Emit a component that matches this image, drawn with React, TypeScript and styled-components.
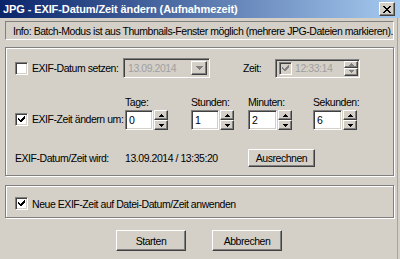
import React from "react";
import styled, { createGlobalStyle, css } from "styled-components";

const Global = createGlobalStyle`
  html, body { margin: 0; padding: 0; background: #d4d0c8; }
  * { box-sizing: border-box; }
`;

const raised = css`
  border-style: solid;
  border-width: 1px;
  border-color: #fff #404040 #404040 #fff;
  box-shadow: inset -1px -1px 0 #808080, inset 1px 1px 0 #d4d0c8;
`;

const sunken = css`
  border-style: solid;
  border-width: 1px;
  border-color: #808080 #fff #fff #808080;
  box-shadow: inset 1px 1px 0 #404040, inset -1px -1px 0 #d4d0c8;
`;

const Window = styled.div`
  width: 400px;
  height: 259px;
  background: #d4d0c8;
  font-family: "Liberation Sans", Arial, sans-serif;
  font-size: 10.5px;
  letter-spacing: -0.45px;
  color: #000;
  display: flex;
  flex-direction: column;
  overflow: hidden;
`;

const TitleBar = styled.div`
  height: 18px;
  background: linear-gradient(to right, #0a246a, #a6caf0);
  display: flex;
  align-items: center;
  justify-content: space-between;
  padding: 0 5px 0 3px;
`;

const TitleText = styled.span`
  color: #fff;
  font-family: "Liberation Sans", Arial, sans-serif;
  font-weight: bold;
  font-size: 11px;
  letter-spacing: -0.1px;
  white-space: nowrap;
`;

const CloseButton = styled.div`
  width: 16px;
  height: 14px;
  background: #d4d0c8;
  ${raised};
  display: flex;
  align-items: center;
  justify-content: center;
`;

const Content = styled.div`
  flex: 1;
  display: flex;
  flex-direction: column;
  padding: 3px 3px 0 5px;
  margin-right: 2px;
  border-right: 1px solid #a8a49c;
`;

const InfoBox = styled.div`
  height: 19px;
  border: 1px solid;
  border-color: #808080 #fff #fff #808080;
  display: flex;
  align-items: center;
  padding-left: 7px;
  white-space: nowrap;
`;

const Group = styled.div<{ $h: number; $mt: number }>`
  height: ${(p) => p.$h}px;
  margin-top: ${(p) => p.$mt}px;
  border: 1px solid #808080;
  box-shadow: inset 1px 1px 0 #fff, 1px 1px 0 #fff;
  padding: 0 0 0 9px;
  display: flex;
  flex-direction: column;
`;

const Row = styled.div<{ $mt: number }>`
  display: flex;
  align-items: center;
  margin-top: ${(p) => p.$mt}px;
`;

const CheckLabel = styled.label<{ $w?: number }>`
  display: flex;
  align-items: center;
  gap: 4px;
  width: ${(p) => (p.$w ? `${p.$w}px` : "auto")};
  white-space: nowrap;
`;

const Box = styled.span<{ $disabled?: boolean }>`
  width: 13px;
  height: 13px;
  background: ${(p) => (p.$disabled ? "#d4d0c8" : "#fff")};
  ${sunken};
  display: inline-flex;
  align-items: center;
  justify-content: center;
  flex: none;
`;

const Check = ({ checked, disabled }: { checked?: boolean; disabled?: boolean }) => (
  <Box $disabled={disabled}>
    {checked && (
      <svg width="7" height="7" viewBox="0 0 7 7">
        <path
          d="M0 2h1v1h1v1h1V3h1V2h1V1h1V0h1v3h-1v1h-1v1h-1v1h-1v1H3V6H2V5H1V4H0z"
          fill={disabled ? "#808080" : "#000"}
        />
      </svg>
    )}
  </Box>
);

const Combo = styled.div`
  width: 87px;
  height: 20px;
  margin-left: -2px;
  background: #d4d0c8;
  ${sunken};
  display: flex;
  align-items: stretch;
  padding: 2px;
`;

const ComboText = styled.span`
  flex: 1;
  color: #a0a0a0;
  display: flex;
  align-items: center;
  padding-left: 2px;
`;

const DropButton = styled.div`
  width: 16px;
  background: #d4d0c8;
  ${raised};
  display: flex;
  align-items: center;
  justify-content: center;
`;

const ZeitLabel = styled.span`
  margin-left: 33px;
  width: 32px;
`;

const TimePicker = styled.div`
  width: 85px;
  height: 19px;
  background: #d4d0c8;
  ${sunken};
  display: flex;
  align-items: center;
  padding: 2px 1px 2px 3px;
`;

const DisabledText = styled.span`
  color: #a0a0a0;
  margin-left: 3px;
  flex: 1;
`;

const SpinStack = styled.div<{ $h: number }>`
  width: 14px;
  height: ${(p) => p.$h}px;
  display: flex;
  flex-direction: column;
  flex: none;
`;

const SpinBtn = styled.div`
  flex: 1;
  background: #d4d0c8;
  ${raised};
  display: flex;
  align-items: center;
  justify-content: center;
`;

const Arrow = ({ up, color = "#000" }: { up?: boolean; color?: string }) => (
  <svg width="5" height="3" viewBox="0 0 5 3">
    <path d={up ? "M2 0h1v1h1v1h1v1H0V2h1V1h1z" : "M0 0h5v1H4v1H3v1H2V2H1V1H0z"} fill={color} />
  </svg>
);

const Spinner = ({ h, color }: { h: number; color?: string }) => (
  <SpinStack $h={h}>
    <SpinBtn>
      <Arrow up color={color} />
    </SpinBtn>
    <SpinBtn>
      <Arrow color={color} />
    </SpinBtn>
  </SpinStack>
);

const Grid = styled.div`
  display: grid;
  grid-template-columns: 110px 66px 57px 65px 44px;
  grid-template-rows: 11px 22px 37px;
  margin-top: 19px;
  flex: none;
`;

const ColLabel = styled.span<{ $col: number }>`
  grid-column: ${(p) => p.$col};
  grid-row: 1;
  line-height: 11px;
  white-space: nowrap;
`;

const SpinCell = styled.div<{ $col: number }>`
  grid-column: ${(p) => p.$col};
  grid-row: 2;
  align-self: end;
  display: flex;
  gap: 1px;
  height: 20px;
`;

const Edit = styled.div<{ $w: number }>`
  width: ${(p) => p.$w}px;
  height: 20px;
  background: #fff;
  ${sunken};
  padding: 2px 3px;
  display: flex;
  align-items: center;
`;

const Cell = styled.div<{ $col: string; $row: number }>`
  grid-column: ${(p) => p.$col};
  grid-row: ${(p) => p.$row};
  display: flex;
  align-items: center;
  white-space: nowrap;
`;

const ResultCell = styled(Cell)`
  align-self: end;
  height: 18px;
`;

const Button = styled.div<{ $w: number; $h: number }>`
  width: ${(p) => p.$w}px;
  height: ${(p) => p.$h}px;
  background: #d4d0c8;
  ${raised};
  display: flex;
  align-items: center;
  justify-content: center;
`;

const ButtonRow = styled.div`
  display: flex;
  gap: 26px;
  margin-top: 12px;
  padding-left: 111px;
`;

const spins = [
  { col: 2, label: "Tage:", value: "0", w: 28 },
  { col: 3, label: "Stunden:", value: "1", w: 28 },
  { col: 4, label: "Minuten:", value: "2", w: 29 },
  { col: 5, label: "Sekunden:", value: "6", w: 29 },
];

export default function App() {
  return (
    <>
      <Global />
      <Window>
        <TitleBar>
          <TitleText>JPG - EXIF-Datum/Zeit ändern (Aufnahmezeit)</TitleText>
          <CloseButton>
            <svg width="8" height="7" viewBox="0 0 8 7">
              <path
                d="M0 0h2v1h1v1h2V1h1V0h2v1H7v1H6v1H5v1h1v1h1v1h1v1H6V6H5V5H3v1H2v1H0V6h1V5h1V4h1V3H2V2H1V1H0z"
                fill="#000"
              />
            </svg>
          </CloseButton>
        </TitleBar>
        <Content>
          <InfoBox>Info: Batch-Modus ist aus Thumbnails-Fenster möglich (mehrere JPG-Dateien markieren).</InfoBox>
          <Group $h={129} $mt={7}>
            <Row $mt={10}>
              <CheckLabel $w={110}>
                <Check />
                EXIF-Datum setzen:
              </CheckLabel>
              <Combo>
                <ComboText>13.09.2014</ComboText>
                <DropButton>
                  <svg width="7" height="4" viewBox="0 0 7 4">
                    <path d="M0 0h7v1H6v1H5v1H4v1H3V3H2V2H1V1H0z" fill="#808080" />
                  </svg>
                </DropButton>
              </Combo>
              <ZeitLabel>Zeit:</ZeitLabel>
              <TimePicker>
                <Check checked disabled />
                <DisabledText>12:33:14</DisabledText>
                <Spinner h={15} color="#808080" />
              </TimePicker>
            </Row>
            <Grid>
              {spins.map((s) => (
                <ColLabel key={s.label} $col={s.col}>
                  {s.label}
                </ColLabel>
              ))}
              <Cell $col="1" $row={2}>
                <CheckLabel>
                  <Check checked />
                  EXIF-Zeit ändern um:
                </CheckLabel>
              </Cell>
              {spins.map((s) => (
                <SpinCell key={s.value} $col={s.col}>
                  <Edit $w={s.w}>{s.value}</Edit>
                  <Spinner h={20} />
                </SpinCell>
              ))}
              <ResultCell $col="1" $row={3}>EXIF-Datum/Zeit wird:</ResultCell>
              <ResultCell $col="2 / 4" $row={3}>13.09.2014 / 13:35:20</ResultCell>
              <ResultCell $col="4 / 6" $row={3}>
                <Button $w={67} $h={18}>Ausrechnen</Button>
              </ResultCell>
            </Grid>
          </Group>
          <Group $h={33} $mt={9}>
            <Row $mt={11}>
              <CheckLabel>
                <Check checked />
                Neue EXIF-Zeit auf Datei-Datum/Zeit anwenden
              </CheckLabel>
            </Row>
          </Group>
          <ButtonRow>
            <Button $w={70} $h={21}>Starten</Button>
            <Button $w={70} $h={21}>Abbrechen</Button>
          </ButtonRow>
        </Content>
      </Window>
    </>
  );
}
